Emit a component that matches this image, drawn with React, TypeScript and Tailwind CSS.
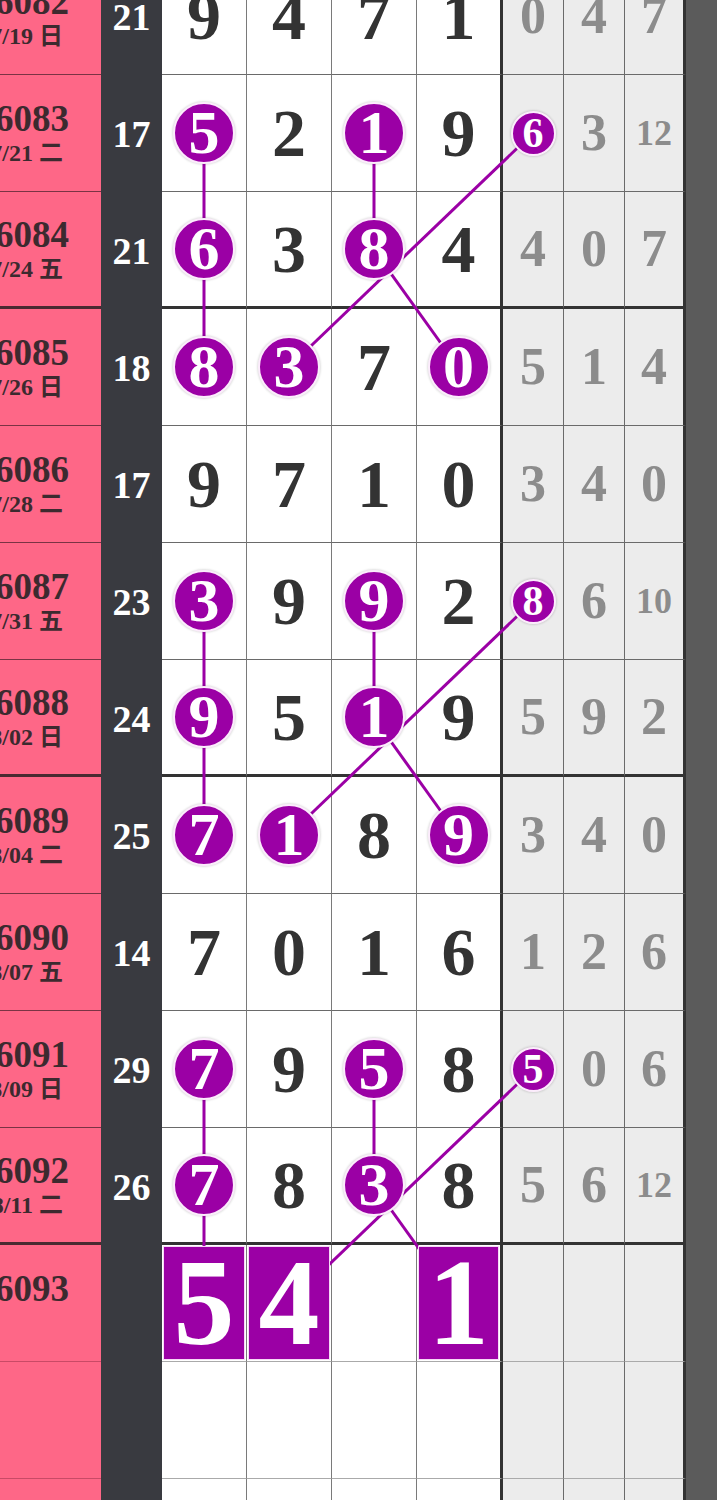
import React from 'react';

interface DrawRow {
  issue?: string;
  date?: string;
  sum?: number;
  digits?: number[];
  boxes?: (number | null)[];
  extra?: number[];
  marked?: number[];
  markedExtra?: number[];
}

const ROW_H = 117;
const COL_X = [204, 289, 374, 458, 533, 594, 654];

const rows: DrawRow[] = [
  { issue: '6082', date: '7/19 日', sum: 21, digits: [9, 4, 7, 1], extra: [0, 4, 7] },
  { issue: '6083', date: '7/21 二', sum: 17, digits: [5, 2, 1, 9], extra: [6, 3, 12], marked: [0, 2], markedExtra: [0] },
  { issue: '6084', date: '7/24 五', sum: 21, digits: [6, 3, 8, 4], extra: [4, 0, 7], marked: [0, 2] },
  { issue: '6085', date: '7/26 日', sum: 18, digits: [8, 3, 7, 0], extra: [5, 1, 4], marked: [0, 1, 3] },
  { issue: '6086', date: '7/28 二', sum: 17, digits: [9, 7, 1, 0], extra: [3, 4, 0] },
  { issue: '6087', date: '7/31 五', sum: 23, digits: [3, 9, 9, 2], extra: [8, 6, 10], marked: [0, 2], markedExtra: [0] },
  { issue: '6088', date: '8/02 日', sum: 24, digits: [9, 5, 1, 9], extra: [5, 9, 2], marked: [0, 2] },
  { issue: '6089', date: '8/04 二', sum: 25, digits: [7, 1, 8, 9], extra: [3, 4, 0], marked: [0, 1, 3] },
  { issue: '6090', date: '8/07 五', sum: 14, digits: [7, 0, 1, 6], extra: [1, 2, 6] },
  { issue: '6091', date: '8/09 日', sum: 29, digits: [7, 9, 5, 8], extra: [5, 0, 6], marked: [0, 2], markedExtra: [0] },
  { issue: '6092', date: '8/11 二', sum: 26, digits: [7, 8, 3, 8], extra: [5, 6, 12], marked: [0, 2] },
  { issue: '6093', boxes: [5, 4, null, 1] },
  {},
  {},
];

// connecting lines, [col, row] -> [col, row]
const links: [number, number, number, number][] = [];
[1, 5, 9].forEach((r) => {
  links.push([0, r, 0, r + 1], [0, r + 1, 0, r + 2]);
  links.push([2, r, 2, r + 1]);
  links.push([4, r, 1, r + 2]);
  links.push([2, r + 1, 3, r + 2]);
});

const cy = (r: number) => r * ROW_H + 58;

const Ball = ({ n }: { n: number }) => (
  <div className="relative z-10 w-[62px] h-[62px] rounded-full bg-[#9b00a5] border-2 border-[#fcecfc] shadow-[0_0_2px_1px_rgba(0,0,0,0.12)] flex items-center justify-center text-white text-[62px] font-bold leading-none pb-[2px]">
    {n}
  </div>
);

const SmallBall = ({ n }: { n: number }) => (
  <div className="relative z-10 w-[45px] h-[45px] rounded-full bg-[#9b00a5] border-2 border-[#fcecfc] shadow-[0_0_2px_1px_rgba(0,0,0,0.12)] flex items-center justify-center text-white text-[42px] font-bold leading-none pb-[1px]">
    {n}
  </div>
);

export default function App() {
  return (
    <div className="w-[717px] h-[1500px] overflow-hidden bg-white font-['Liberation_Serif','Noto_Sans_CJK_TC',serif]">
      <div className="relative -mt-[42px]">
        {rows.map((row, i) => {
          const groupEnd = i % 4 === 2;
          const after = i > 10;
          const hb = groupEnd ? 'border-b-[3px] border-b-[#333]' : after ? 'border-b border-b-[#aaa]' : 'border-b border-b-[#6a6a6a]';
          const pinkB = groupEnd ? 'border-b-[3px] border-b-[#4a2a31]' : after ? 'border-b border-b-[#c94a66]' : 'border-b border-b-[#7a3344]';
          return (
            <div key={i} className="flex h-[117px]">
              <div className={`w-[101px] shrink-0 bg-[#fe6787] flex flex-col items-end justify-center text-[#3c2a2f] font-bold ${pinkB}`}>
                <div className="text-[37px] leading-[40px] mr-[32px] whitespace-nowrap">{row.issue}</div>
                <div className="text-[24px] leading-[28px] mr-[38px] whitespace-nowrap">{row.issue ? row.date || '\u00a0' : ''}</div>
              </div>
              <div className="w-[61px] shrink-0 bg-[#393a40] flex items-center justify-center text-white text-[38px] font-bold leading-none">
                {row.sum}
              </div>
              {[0, 1, 2, 3].map((c) => {
                const v = row.digits?.[c];
                const box = row.boxes?.[c];
                const last = c === 3;
                return (
                  <div
                    key={c}
                    className={`${last ? 'w-[86px] border-r-[3px] border-r-[#333]' : 'w-[85px] border-r border-r-[#7a7a7a]'} shrink-0 bg-white flex items-center justify-center ${hb}`}
                  >
                    {box != null ? (
                      <div className="relative z-10 w-full h-full p-[1px]">
                        <div className="w-full h-full bg-[#9b00a5] border border-[#f6d8f6] flex items-center justify-center text-white text-[122px] font-bold leading-none">
                          {box}
                        </div>
                      </div>
                    ) : v == null ? null : row.marked?.includes(c) ? (
                      <Ball n={v} />
                    ) : (
                      <span className="text-[#333] text-[68px] font-bold leading-none">{v}</span>
                    )}
                  </div>
                );
              })}
              {[0, 1, 2].map((c) => {
                const v = row.extra?.[c];
                const last = c === 2;
                return (
                  <div
                    key={c}
                    className={`${last ? 'w-[61px] border-r-[3px] border-r-[#333]' : 'w-[61px] border-r border-r-[#6a6a6a]'} shrink-0 bg-[#ececec] flex items-center justify-center ${hb}`}
                  >
                    {v == null ? null : row.markedExtra?.includes(c) ? (
                      <SmallBall n={v} />
                    ) : (
                      <span className={`text-[#8c8c8c] font-bold leading-none ${v > 9 ? 'text-[36px]' : 'text-[52px]'}`}>{v}</span>
                    )}
                  </div>
                );
              })}
              <div className="flex-1 bg-[#5b5b5b]" />
            </div>
          );
        })}
        <svg className="absolute left-0 top-0 pointer-events-none" width={717} height={rows.length * ROW_H}>
          {links.map(([c1, r1, c2, r2], k) => (
            <line key={k} x1={COL_X[c1]} y1={cy(r1)} x2={COL_X[c2]} y2={cy(r2)} stroke="#9b00a5" strokeWidth={3} />
          ))}
        </svg>
      </div>
    </div>
  );
}
